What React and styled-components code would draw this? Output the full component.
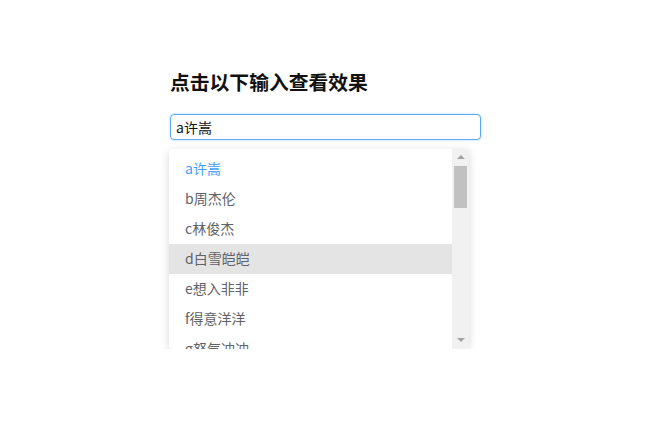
import React from "react";
import styled, { createGlobalStyle } from "styled-components";

const Global = createGlobalStyle`
  html, body { margin: 0; padding: 0; background: #fff; }
  body { font-family: "Noto Sans CJK SC", "Noto Sans", sans-serif; }
`;

const Page = styled.div`
  padding: 70px 0 0 170px;
  width: 311px;
`;

const Title = styled.h3`
  margin: 0 0 17px;
  font-family: "Liberation Serif", "Noto Sans CJK SC", serif;
  font-size: 19.8px;
  line-height: 27px;
  font-weight: 700;
  color: #111;
`;

const Input = styled.div`
  box-sizing: border-box;
  height: 26px;
  width: 311px;
  border: 1px solid #5aa6f7;
  border-radius: 4px;
  box-shadow: 0 0 2px rgba(64, 158, 255, 0.55);
  padding: 0 5px;
  display: flex;
  align-items: center;
  font-size: 14px;
  color: #111;
`;

const Dropdown = styled.div`
  margin: 9px 0 0 -1px;
  width: 300px;
  height: 200px;
  box-sizing: border-box;
  border-radius: 4px;
  background: #fff;
  box-shadow: 0 2px 8px rgba(0, 0, 0, 0.16);
  display: flex;
  overflow: hidden;
`;

const List = styled.ul`
  flex: 1;
  list-style: none;
  margin: 0;
  padding: 5px 0 0;
  overflow: hidden;
`;

const Item = styled.li`
  height: 30px;
  line-height: 29px;
  padding-left: 16px;
  font-size: 14px;
  color: ${(p) => (p.$active ? "#409eff" : "#606266")};
  background: ${(p) => (p.$hover ? "#e4e4e4" : "transparent")};
  white-space: nowrap;
`;

const Scrollbar = styled.div`
  width: 17px;
  background: #f1f1f1;
  display: flex;
  flex-direction: column;
  align-items: center;
`;

const Arrow = styled.div`
  width: 0;
  height: 0;
  border-left: 4px solid transparent;
  border-right: 4px solid transparent;
  ${(p) =>
    p.$down
      ? "border-top: 4px solid #a3a3a3; margin: auto 0 7px;"
      : "border-bottom: 4px solid #a3a3a3; margin: 6px 0 0;"}
`;

const Thumb = styled.div`
  width: 13px;
  height: 42px;
  margin-top: 7px;
  background: #c1c1c1;
`;

const items = [
  "a许嵩",
  "b周杰伦",
  "c林俊杰",
  "d白雪皑皑",
  "e想入非非",
  "f得意洋洋",
  "g怒气冲冲",
];

export default function App() {
  return (
    <>
      <Global />
      <Page>
        <Title>点击以下输入查看效果</Title>
        <Input>a许嵩</Input>
        <Dropdown>
          <List>
            {items.map((t, i) => (
              <Item key={t} $active={i === 0} $hover={i === 3}>
                {t}
              </Item>
            ))}
          </List>
          <Scrollbar>
            <Arrow />
            <Thumb />
            <Arrow $down />
          </Scrollbar>
        </Dropdown>
      </Page>
    </>
  );
}
